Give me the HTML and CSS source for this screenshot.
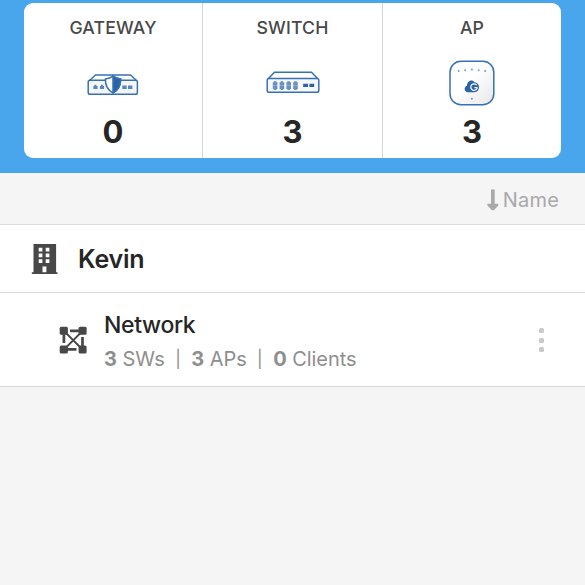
FILE: index.html
```
<!DOCTYPE html>
<html lang="en">
<head>
<meta charset="utf-8">
<title>Network</title>
<link rel="stylesheet" href="styles.css">
</head>
<body>
<header class="hero">
  <div class="summary">
    <section class="device">
      <h2 class="label">GATEWAY</h2>
      <div class="picture">
        <svg class="gateway-art" width="52" height="24" viewBox="0 0 52 24" fill="none" stroke="#3672b3" stroke-width="1.5">
          <path d="M2.500 7.500 8.500 2h35l6 5.500" fill="#fff"/>
          <rect x="1.200" y="7.300" width="49.200" height="14" rx="1.800" fill="#f5f5f6"/>
          <g fill="#5788bd" stroke="none"><path d="M6.400 13h1v-1.200h2V13h1.200v3H6.400zM12.900 13h1v-1.200h2V13h1.200v3h-4.200zM35.300 12.500h4.400v3.400h-4.400zM41 12.500h4.400v3.400H41z"/></g>
          <path d="M26 3.200c2.400 1.900 4.900 2.500 7.600 2.800.2 6.300-2.300 11-7.600 13.900-5.300-2.900-7.800-7.600-7.600-13.900 2.700-.3 5.200-.9 7.600-2.800z" fill="#fff"/>
          <path d="M26 3.200c2.400 1.900 4.900 2.500 7.600 2.800.2 6.300-2.300 11-7.600 13.900z" fill="#2a64a7"/>
        </svg>
      </div>
      <p class="count">0</p>
    </section>
    <section class="device">
      <h2 class="label">SWITCH</h2>
      <div class="picture">
        <svg class="switch-art" width="54" height="24" viewBox="0 0 54 24" fill="none" stroke="#3672b3" stroke-width="1.5">
          <path d="M2.500 7.500 8.500 1.300h37l6 6.200" fill="#fff"/>
          <rect x="1.200" y="7.500" width="51.600" height="13.800" rx="1.800" fill="#f7f7f8"/>
          <g fill="#6891c1" stroke="none">
            <path id="port" d="M6.800 11.200h1v-1h2.600v1h1v3.200H6.800zM6.800 14.800h4.600V18h-1v1H7.800v-1h-1z"/>
            <use href="#port" x="6.800"/><use href="#port" x="13.600"/><use href="#port" x="20.400"/>
            <path fill="#2a64a7" d="M37.200 12.800h4.800v3.300h-4.800zM43.400 12.800h4.800v3.300h-4.800z"/>
          </g>
        </svg>
      </div>
      <p class="count">3</p>
    </section>
    <section class="device">
      <h2 class="label">AP</h2>
      <div class="picture">
        <svg width="46" height="46" viewBox="0 0 46 46">
          <defs><linearGradient id="shell" x1="0" y1="0" x2="1" y2="1"><stop offset=".45" stop-color="#fff"/><stop offset="1" stop-color="#e6e6e8"/></linearGradient></defs>
          <rect x="1" y="1.200" width="43.800" height="43.600" rx="11" fill="url(#shell)" stroke="#3672b3" stroke-width="1.500"/>
          <g fill="#6f9bca"><circle cx="9.600" cy="11" r="1"/><circle cx="16.200" cy="10.200" r="1"/><circle cx="22.900" cy="9.600" r="1"/><circle cx="29.600" cy="10.200" r="1"/><circle cx="36.200" cy="11" r="1"/><circle cx="22.900" cy="38.700" r="1"/></g>
          <path d="M18.900 32.200c-3.800-.1-4.500-5.600-.9-6.500-.1-4.700 4.900-7.100 7.400-3.500 2.700.2 4.600 2 4.600 5 0 3.100-2.300 5-5 5z" fill="#2a64a7"/>
          <path d="M27.700 25.100a3.300 3.300 0 1 0 .3 3.500v-.9h-2.500" fill="none" stroke="#fff" stroke-width="1.200"/>
        </svg>
      </div>
      <p class="count">3</p>
    </section>
  </div>
</header>
<div class="sortbar">
  <svg width="12" height="22" viewBox="0 0 12 22"><path d="M4 .5h3.700v14.200h3.600v1.700L6.800 21.200H5L.4 16.400v-1.700H4z" fill="#a9a9aa"/></svg>
  <span class="sort-name">Name</span>
</div>
<div class="site">
  <svg width="28" height="32" viewBox="0 0 28 32">
    <path d="M2.500 1h22.600v28.200h1.400V31H.8v-1.800h1.700z" fill="#484848"/>
    <path d="M7.700 4.800h3.700v3.700H7.700zM14.700 4.800h3.700v3.700h-3.700zM7.700 10.500h3.700v3.700H7.700zM14.700 10.500h3.700v3.700h-3.700zM7.700 16.200h3.700v3.700H7.700zM14.700 16.200h3.700v3.700h-3.700zM11.500 23.500h3.900v5.700h-3.900z" fill="#fff"/>
  </svg>
  <span class="site-name">Kevin</span>
</div>
<div class="network">
  <svg width="28" height="28" viewBox="0 0 28 28" fill="#484848">
    <rect x=".7" y=".7" width="8.200" height="8" rx="1.500"/><rect x="19.600" y=".7" width="8" height="8" rx="1.500"/>
    <rect x=".7" y="19.600" width="8.200" height="8" rx="1.500"/><rect x="19.600" y="19.600" width="8" height="8" rx="1.500"/>
    <path d="M7 7l14.500 14.500M21.500 7 7 21.500" stroke="#484848" stroke-width="1.800"/>
    <path d="M11 4.900h9M23.500 11v9M8 23.300h9.500M4.900 8v9" stroke="#484848" stroke-width="2.700"/>
  </svg>
  <div class="details">
    <div class="title">Network</div>
    <div class="stats"><span><b>3</b> SWs</span><i>|</i><span><b>3</b> APs</span><i>|</i><span><b>0</b> Clients</span></div>
  </div>
  <div class="more"><span></span><span></span><span></span></div>
</div>
</body>
</html>
```
FILE: styles.css
```
* { box-sizing: border-box; }
body { margin: 0; background: #f5f5f5; font-family: Inter, "Liberation Sans", sans-serif; color: #262626; }
svg { display: block; flex: none; }
.hero { height: 173px; padding: 3px 24px 15px; background: #49a5ec; }
.summary { display: grid; grid-template-columns: 178px 180px 179px; height: 155px; background: #fff; border-radius: 9px; }
.device { display: flex; flex-direction: column; align-items: center; }
.device + .device { border-left: 1px solid #d5d5d5; }
.label { margin: 13px 0 0; font-size: 17.700px; line-height: 23px; font-weight: 450; letter-spacing: 0.150px; color: #484848; }
.picture { height: 46px; margin-top: 21px; display: flex; align-items: center; }
.gateway-art { margin-top: 3px; }
.switch-art { margin-top: 0; }
.count { margin: 7px 0 0; font-size: 31px; line-height: 38px; font-weight: 650; }
.sortbar { height: 52px; padding: 2px 26px 0 0; display: flex; align-items: center; justify-content: flex-end; gap: 4px; border-bottom: 1px solid #dcdcdc; }
.sort-name { padding-top: 1px; font-size: 20px; letter-spacing: 0.200px; color: #a9a9aa; }
.site { height: 68px; padding-left: 31px; display: flex; align-items: center; gap: 19px; background: #fff; border-bottom: 1px solid #dcdcdc; }
.site-name { font-size: 25px; font-weight: 600; letter-spacing: -0.200px; }
.network { height: 94px; padding: 1px 41px 0 59px; display: flex; align-items: center; background: #fff; border-bottom: 1px solid #d8d8d8; }
.details { flex: 1; margin-left: 17px; }
.title { padding-top: 2px; font-size: 23px; line-height: 30px; font-weight: 500; letter-spacing: -0.350px; }
.stats { display: flex; margin-top: 5px; font-size: 20px; line-height: 28px; letter-spacing: -0.050px; color: #8e8e8e; white-space: nowrap; }
.stats b { font-weight: 700; }
.stats i { width: 26.500px; font-size: 17px; text-align: center; font-style: normal; }
.more { display: grid; gap: 4.500px; }
.more span { width: 5px; height: 5px; border-radius: 1.500px; background: #c8cacc; }
```
